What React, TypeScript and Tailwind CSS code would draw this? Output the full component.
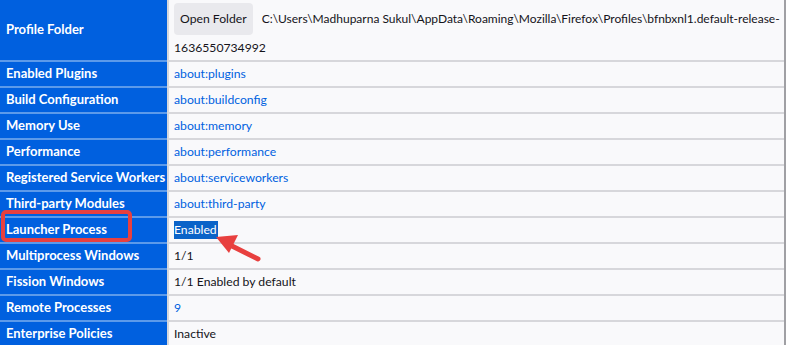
const rows: { label: string; value: string; link?: boolean }[] = [
  { label: "Enabled Plugins", value: "about:plugins", link: true },
  { label: "Build Configuration", value: "about:buildconfig", link: true },
  { label: "Memory Use", value: "about:memory", link: true },
  { label: "Performance", value: "about:performance", link: true },
  { label: "Registered Service Workers", value: "about:serviceworkers", link: true },
  { label: "Third-party Modules", value: "about:third-party", link: true },
  { label: "Launcher Process", value: "Enabled" },
  { label: "Multiprocess Windows", value: "1/1" },
  { label: "Fission Windows", value: "1/1 Enabled by default" },
  { label: "Remote Processes", value: "9", link: true },
  { label: "Enterprise Policies", value: "Inactive" },
];

export default function App() {
  return (
    <div
      className="relative w-[788px] h-[345px] overflow-hidden bg-white text-[13px] text-[#15141a]"
      style={{ fontFamily: 'Lato, "Noto Sans", sans-serif' }}
    >
      <div className="w-[786px] border-r-2 border-[#a0a0a4] grid grid-cols-[167px_1fr]">
        {/* Profile folder row */}
        <div className="h-[62px] bg-[#0060df] border-b-2 border-[#5c9aea] text-white font-bold flex items-center pl-[6px]">
          Profile Folder
        </div>
        <div className="h-[62px] bg-[#f9f9fb] border-b-2 border-l-2 border-[#d7d7db] pl-[5px] pt-[3px] text-[12.2px]">
          <div className="flex items-center gap-[9px]">
            <button className="h-[32px] px-[6px] rounded-[4px] bg-[#e9e9ed] text-[#15141a] whitespace-nowrap">
              Open Folder
            </button>
            <span className="whitespace-nowrap text-[12px]">
              C:\Users\Madhuparna Sukul\AppData\Roaming\Mozilla\Firefox\Profiles\bfnbxnl1.default-release-
            </span>
          </div>
          <div className="mt-[3px] leading-[20px]">1636550734992</div>
        </div>

        {rows.map((r) => (
          <Row key={r.label} {...r} />
        ))}
      </div>

      {/* red callout box */}
      <div className="absolute left-[1px] top-[210px] w-[131px] h-[32px] border-[4px] border-[#e8403f] rounded-[5px]" />

      {/* arrow */}
      <svg className="absolute left-0 top-0" width="788" height="345">
        <line x1="258" y1="259" x2="228" y2="244" stroke="#e8403f" strokeWidth="5" strokeLinecap="round" />
        <polygon points="216,237 238,235 229,253" fill="#e8403f" />
      </svg>
    </div>
  );
}

function Row({ label, value, link }: { label: string; value: string; link?: boolean }) {
  const selected = label === "Launcher Process";
  return (
    <>
      <div className="h-[26px] bg-[#0060df] border-b-2 border-[#5c9aea] text-white font-bold flex items-center pl-[6px] whitespace-nowrap">
        {label}
      </div>
      <div className="h-[26px] bg-[#f9f9fb] border-b-2 border-l-2 border-[#d7d7db] flex items-center pl-[5px] text-[12.2px]">
        {selected ? (
          <span className="bg-[#0a63c8] text-white leading-[18px] pr-[1px]">{value}</span>
        ) : (
          <span className={link ? "text-[#0061e0]" : ""}>{value}</span>
        )}
      </div>
    </>
  );
}
